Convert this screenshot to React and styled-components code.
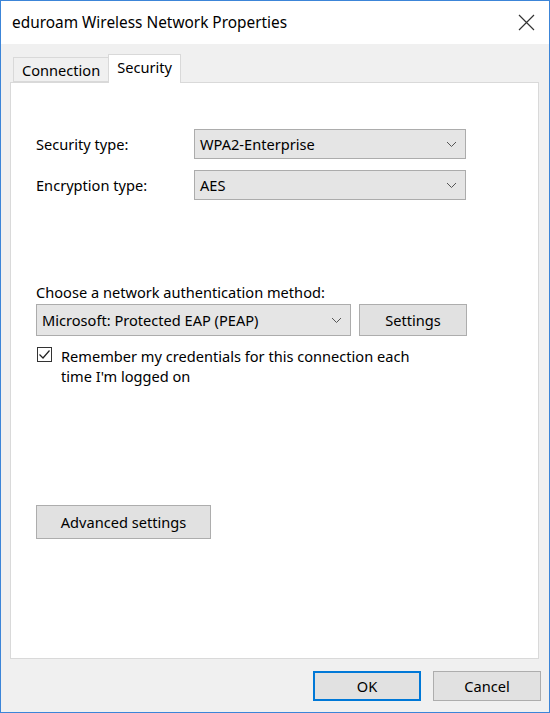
import React from "react";
import styled, { createGlobalStyle } from "styled-components";

const GlobalStyle = createGlobalStyle`
  html, body {
    margin: 0;
    padding: 0;
    background: #ffffff;
  }
  * {
    box-sizing: border-box;
  }
  body {
    font-family: "Noto Sans", "Open Sans", sans-serif;
    font-size: 14.6px;
    color: #000;
  }
`;

const Window = styled.div`
  width: 550px;
  height: 713px;
  border: 1px solid #3c85d8;
  display: flex;
  flex-direction: column;
  background: #f0f0f0;
`;

const TitleBar = styled.div`
  height: 43px;
  background: #ffffff;
  display: flex;
  align-items: center;
  justify-content: space-between;
  padding: 0 14px 0 11px;
  font-size: 15.4px;
  color: #000;
`;

const Body = styled.div`
  flex: 1;
  display: flex;
  flex-direction: column;
  padding: 10px 10px 0 9px;
`;

const TabRow = styled.div`
  display: flex;
  align-items: flex-end;
  height: 28px;
  padding-left: 3px;
  position: relative;
  z-index: 1;
`;

const Tab = styled.div`
  height: ${(p) => (p.$active ? "29px" : "25px")};
  margin-bottom: ${(p) => (p.$active ? "-1px" : "0")};
  padding: 0 ${(p) => (p.$active ? "8px" : "8px")};
  margin-left: ${(p) => (p.$active ? "-1px" : "0")};
  background: ${(p) => (p.$active ? "#ffffff" : "#f0f0f0")};
  border: 1px solid #d9d9d9;
  border-bottom: ${(p) => (p.$active ? "none" : "1px solid #d9d9d9")};
  display: flex;
  align-items: ${(p) => (p.$active ? "flex-start" : "center")};
  padding-top: ${(p) => (p.$active ? "2px" : "1px")};
  font-size: 14.6px;
`;

const Panel = styled.div`
  flex: 1;
  background: #ffffff;
  border: 1px solid #d9d9d9;
  padding: 46px 25px 0 25px;
  display: flex;
  flex-direction: column;
`;

const FieldGrid = styled.div`
  display: grid;
  grid-template-columns: 158px 272px;
  row-gap: 11px;
  align-items: center;
`;

const Label = styled.div`
  font-size: 14.6px;
`;

const Select = styled.div`
  height: ${(p) => p.$height || "30px"};
  width: ${(p) => p.$width || "100%"};
  background: #e5e5e5;
  border: 1px solid #acacac;
  display: flex;
  align-items: center;
  justify-content: space-between;
  padding: 0 8px 0 5px;
  font-size: 14.6px;
`;

const Chevron = () => (
  <svg width="11" height="7" viewBox="0 0 11 7">
    <path d="M1 1 L5.5 5.5 L10 1" fill="none" stroke="#555" strokeWidth="1" />
  </svg>
);

const AuthSection = styled.div`
  margin-top: 82px;
  display: flex;
  flex-direction: column;
`;

const AuthRow = styled.div`
  display: flex;
  gap: 8px;
  margin-top: 2px;
`;

const Button = styled.div`
  width: ${(p) => p.$width};
  height: ${(p) => p.$height || "32px"};
  background: #e1e1e1;
  border: ${(p) => (p.$primary ? "2px solid #0078d7" : "1px solid #adadad")};
  display: flex;
  align-items: center;
  justify-content: center;
  font-size: 14.6px;
`;

const CheckRow = styled.label`
  display: flex;
  align-items: flex-start;
  gap: 9px;
  margin-top: 10px;
  padding-left: 1px;
  line-height: 20px;
  font-size: 14.6px;
  width: 400px;
`;

const CheckText = styled.span`
  max-width: 355px;
`;

const CheckBox = styled.span`
  flex: none;
  width: 15px;
  height: 15px;
  margin-top: 1px;
  border: 1px solid #333;
  background: #fff;
  display: flex;
  align-items: center;
  justify-content: center;
`;

const AdvancedWrap = styled.div`
  margin-top: 119px;
`;

const Footer = styled.div`
  height: 53px;
  display: flex;
  justify-content: flex-end;
  align-items: flex-start;
  gap: 12px;
  padding: 12px 0 0 0;
  margin-right: -2px;
`;

export default function App() {
  return (
    <>
      <GlobalStyle />
      <Window>
        <TitleBar>
          <span>eduroam Wireless Network Properties</span>
          <svg width="17" height="17" viewBox="0 0 17 17">
            <path d="M1 1 L16 16 M16 1 L1 16" stroke="#333" strokeWidth="1.2" />
          </svg>
        </TitleBar>
        <Body>
          <TabRow>
            <Tab>Connection</Tab>
            <Tab $active>Security</Tab>
          </TabRow>
          <Panel>
            <FieldGrid>
              <Label>Security type:</Label>
              <Select>
                WPA2-Enterprise
                <Chevron />
              </Select>
              <Label>Encryption type:</Label>
              <Select>
                AES
                <Chevron />
              </Select>
            </FieldGrid>
            <AuthSection>
              <Label>Choose a network authentication method:</Label>
              <AuthRow>
                <Select $width="315px" $height="32px">
                  Microsoft: Protected EAP (PEAP)
                  <Chevron />
                </Select>
                <Button $width="108px">Settings</Button>
              </AuthRow>
              <CheckRow>
                <CheckBox>
                  <svg width="13" height="13" viewBox="0 0 13 13">
                    <path d="M1.5 6.5 L5 10 L11.5 2.5" fill="none" stroke="#222" strokeWidth="1.2" />
                  </svg>
                </CheckBox>
                <CheckText>Remember my credentials for this connection each time I'm logged on</CheckText>
              </CheckRow>
            </AuthSection>
            <AdvancedWrap>
              <Button $width="175px" $height="34px">Advanced settings</Button>
            </AdvancedWrap>
          </Panel>
          <Footer>
            <Button $width="108px" $height="30px" $primary>OK</Button>
            <Button $width="108px" $height="30px">Cancel</Button>
          </Footer>
        </Body>
      </Window>
    </>
  );
}
